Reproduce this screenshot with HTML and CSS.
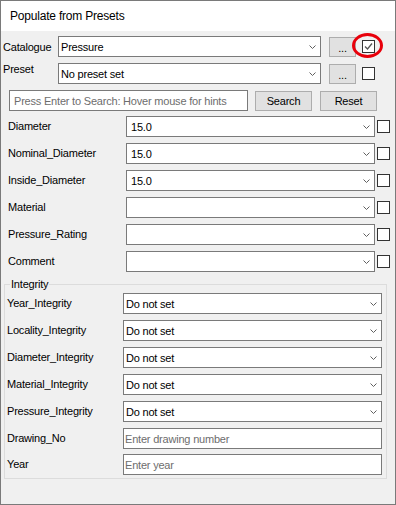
FILE: index.html
```html
<!DOCTYPE html>
<html lang="en">
<head>
    <meta charset="UTF-8">
    <title>Populate from Presets</title>
    <link rel="stylesheet" href="styles.css">
</head>
<body>
    <div class="window">
        <div class="titlebar">Populate from Presets</div>
        <div class="content">
            <div class="preset-row">
                <span class="preset-label">Catalogue</span>
                <div class="combo combo-preset">Pressure
                    <svg class="chevron" width="7" height="4" viewBox="0 0 7 4"><polyline points="0.5,0.5 3.5,3.5 6.5,0.5" fill="none" stroke="#606060" stroke-width="1"/></svg>
                </div>
                <button class="btn btn-dots">...</button>
                <span class="check-wrap">
                    <span class="check">
                        <svg width="11" height="11" viewBox="0 0 11 11"><polyline points="2,5.5 4.5,8 9,2.5" fill="none" stroke="#555" stroke-width="1.3"/></svg>
                    </span>
                    <span class="highlight"></span>
                </span>
            </div>
            <div class="preset-row">
                <span class="preset-label raised">Preset</span>
                <div class="combo combo-preset">No preset set
                    <svg class="chevron" width="7" height="4" viewBox="0 0 7 4"><polyline points="0.5,0.5 3.5,3.5 6.5,0.5" fill="none" stroke="#606060" stroke-width="1"/></svg>
                </div>
                <button class="btn btn-dots">...</button>
                <span class="check"></span>
            </div>
            <div class="search-row">
                <input class="search-box" type="text" placeholder="Press Enter to Search: Hover mouse for hints">
                <button class="btn btn-search">Search</button>
                <button class="btn btn-reset">Reset</button>
            </div>

            <div class="prop-list">
                <div class="prop-row">
                    <span class="prop-label">Diameter</span>
                    <div class="combo combo-prop">15.0<svg class="chevron" width="7" height="4" viewBox="0 0 7 4"><polyline points="0.5,0.5 3.5,3.5 6.5,0.5" fill="none" stroke="#606060"/></svg></div>
                    <span class="check"></span>
                </div>
                <div class="prop-row">
                    <span class="prop-label">Nominal_Diameter</span>
                    <div class="combo combo-prop">15.0<svg class="chevron" width="7" height="4" viewBox="0 0 7 4"><polyline points="0.5,0.5 3.5,3.5 6.5,0.5" fill="none" stroke="#606060"/></svg></div>
                    <span class="check"></span>
                </div>
                <div class="prop-row">
                    <span class="prop-label">Inside_Diameter</span>
                    <div class="combo combo-prop">15.0<svg class="chevron" width="7" height="4" viewBox="0 0 7 4"><polyline points="0.5,0.5 3.5,3.5 6.5,0.5" fill="none" stroke="#606060"/></svg></div>
                    <span class="check"></span>
                </div>
                <div class="prop-row">
                    <span class="prop-label">Material</span>
                    <div class="combo combo-prop"><svg class="chevron" width="7" height="4" viewBox="0 0 7 4"><polyline points="0.5,0.5 3.5,3.5 6.5,0.5" fill="none" stroke="#606060"/></svg></div>
                    <span class="check"></span>
                </div>
                <div class="prop-row">
                    <span class="prop-label">Pressure_Rating</span>
                    <div class="combo combo-prop"><svg class="chevron" width="7" height="4" viewBox="0 0 7 4"><polyline points="0.5,0.5 3.5,3.5 6.5,0.5" fill="none" stroke="#606060"/></svg></div>
                    <span class="check"></span>
                </div>
                <div class="prop-row">
                    <span class="prop-label">Comment</span>
                    <div class="combo combo-prop"><svg class="chevron" width="7" height="4" viewBox="0 0 7 4"><polyline points="0.5,0.5 3.5,3.5 6.5,0.5" fill="none" stroke="#606060"/></svg></div>
                    <span class="check"></span>
                </div>
            </div>

            <fieldset class="group">
                <legend>Integrity</legend>
                <div class="int-row">
                    <span class="int-label">Year_Integrity</span>
                    <div class="combo combo-int">Do not set<svg class="chevron" width="7" height="4" viewBox="0 0 7 4"><polyline points="0.5,0.5 3.5,3.5 6.5,0.5" fill="none" stroke="#606060"/></svg></div>
                </div>
                <div class="int-row">
                    <span class="int-label">Locality_Integrity</span>
                    <div class="combo combo-int">Do not set<svg class="chevron" width="7" height="4" viewBox="0 0 7 4"><polyline points="0.5,0.5 3.5,3.5 6.5,0.5" fill="none" stroke="#606060"/></svg></div>
                </div>
                <div class="int-row">
                    <span class="int-label">Diameter_Integrity</span>
                    <div class="combo combo-int">Do not set<svg class="chevron" width="7" height="4" viewBox="0 0 7 4"><polyline points="0.5,0.5 3.5,3.5 6.5,0.5" fill="none" stroke="#606060"/></svg></div>
                </div>
                <div class="int-row">
                    <span class="int-label">Material_Integrity</span>
                    <div class="combo combo-int">Do not set<svg class="chevron" width="7" height="4" viewBox="0 0 7 4"><polyline points="0.5,0.5 3.5,3.5 6.5,0.5" fill="none" stroke="#606060"/></svg></div>
                </div>
                <div class="int-row">
                    <span class="int-label">Pressure_Integrity</span>
                    <div class="combo combo-int">Do not set<svg class="chevron" width="7" height="4" viewBox="0 0 7 4"><polyline points="0.5,0.5 3.5,3.5 6.5,0.5" fill="none" stroke="#606060"/></svg></div>
                </div>
                <div class="int-row text-row">
                    <span class="int-label">Drawing_No</span>
                    <input class="text-field" type="text" placeholder="Enter drawing number">
                </div>
                <div class="int-row text-row last">
                    <span class="int-label">Year</span>
                    <input class="text-field" type="text" placeholder="Enter year">
                </div>
            </fieldset>
        </div>
    </div>
</body>
</html>
```

FILE: styles.css
```css
body {
    margin: 0;
    background: #f0f0f0;
}

.window {
    width: 396px;
    height: 505px;
    box-sizing: border-box;
    border: 1px solid #7a7a7a;
    background: #f0f0f0;
    font-family: "Liberation Sans", Arial, sans-serif;
    font-size: 11px;
    letter-spacing: -0.2px;
    color: #000;
}

.titlebar {
    height: 30px;
    line-height: 30px;
    background: #fff;
    padding-left: 9px;
    font-size: 12px;
}

.content {
    padding: 5px 0 0 2px;
}

/* top preset rows */
.preset-row {
    display: flex;
    align-items: center;
    height: 21px;
    margin-bottom: 6px;
}

.preset-label {
    width: 55px;
}

.preset-label.raised {
    align-self: flex-start;
    line-height: 14px;
    margin-top: -1px;
}

.combo {
    position: relative;
    height: 21px;
    box-sizing: border-box;
    border: 1px solid #7a7a7a;
    background: #fff;
    display: flex;
    align-items: center;
}

.chevron {
    position: absolute;
    right: 4px;
    top: 8px;
}

.combo-preset {
    width: 263px;
    padding-left: 2px;
}

.btn {
    box-sizing: border-box;
    height: 20px;
    border: 1px solid #adadad;
    background: #e1e1e1;
    font-family: inherit;
    font-size: 11px;
    letter-spacing: inherit;
    color: #000;
    padding: 0;
}

.btn-dots {
    width: 27px;
    margin-left: 8px;
    padding-top: 2px;
}

.check {
    display: inline-flex;
    align-items: center;
    justify-content: center;
    width: 13px;
    height: 13px;
    box-sizing: border-box;
    border: 1px solid #333;
    background: #fff;
}

.preset-row .check,
.check-wrap {
    margin-left: 6px;
}

.check-wrap {
    position: relative;
    display: inline-flex;
}

.check-wrap .check {
    margin-left: 0;
}

.highlight {
    position: absolute;
    left: -10px;
    top: -7px;
    width: 31px;
    height: 25px;
    box-sizing: border-box;
    border: 3px solid #e8000b;
    border-radius: 50%;
}

/* search */
.search-row {
    display: flex;
    align-items: center;
    height: 21px;
    margin: 0 0 5px 6px;
}

.search-box {
    width: 239px;
    height: 21px;
    box-sizing: border-box;
    border: 1px solid #7a7a7a;
    padding: 0 0 0 4px;
    font-family: inherit;
    font-size: 11px;
    letter-spacing: inherit;
    outline: none;
}

.search-box::placeholder,
.text-field::placeholder {
    color: #6d6d6d;
}

.btn-search {
    width: 57px;
    margin-left: 7px;
}

.btn-reset {
    width: 57px;
    margin-left: 8px;
}

/* property list */
.prop-list {
    display: flex;
    flex-direction: column;
    gap: 6px;
    padding-left: 5px;
}

.prop-row {
    display: flex;
    align-items: center;
    height: 21px;
}

.prop-label {
    width: 118px;
    padding-bottom: 2px;
}

.combo-prop {
    width: 249px;
    padding-left: 4px;
}

.prop-row .check {
    margin-left: 2px;
}

/* integrity group */
.group {
    margin: 5px 0 0 1px;
    width: 383px;
    box-sizing: border-box;
    border: 1px solid #dcdcdc;
    padding: 2px 4px 3px 2px;
}

.group legend {
    margin-left: 3px;
    padding: 0 1px;
    line-height: 14px;
}

.int-row {
    display: flex;
    align-items: center;
    height: 21px;
    margin-bottom: 6px;
}

.int-row.last {
    margin-bottom: 0;
}

.text-row {
    margin-bottom: 5px;
}

.int-label {
    width: 116px;
    padding-bottom: 2px;
}

.combo-int {
    width: 259px;
    padding-left: 2px;
}

.text-field {
    width: 259px;
    height: 21px;
    box-sizing: border-box;
    border: 1px solid #7a7a7a;
    padding: 0 0 0 1px;
    font-family: inherit;
    font-size: 11px;
    letter-spacing: inherit;
    outline: none;
}
```
